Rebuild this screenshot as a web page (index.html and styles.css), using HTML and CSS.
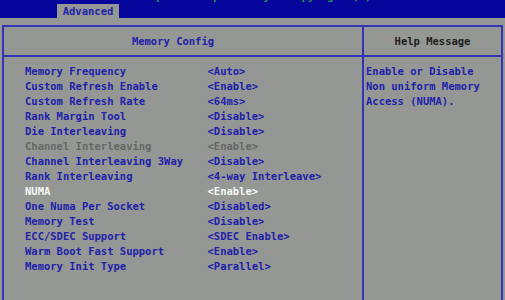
FILE: index.html
```html
<!DOCTYPE html>
<html>
<head>
<meta charset="utf-8">
<link rel="stylesheet" href="styles.css">
</head>
<body>
<div class="topbar">
  <div class="title">Aptio Setup Utility - Copyright (C)</div>
  <div class="tab">Advanced</div>
</div>
<div class="frame">
  <div class="main">
    <div class="head">Memory Config</div>
    <div class="rows">
      <div class="row"><span class="lbl">Memory Frequency</span><span class="val">&lt;Auto&gt;</span></div>
      <div class="row"><span class="lbl">Custom Refresh Enable</span><span class="val">&lt;Enable&gt;</span></div>
      <div class="row"><span class="lbl">Custom Refresh Rate</span><span class="val">&lt;64ms&gt;</span></div>
      <div class="row"><span class="lbl">Rank Margin Tool</span><span class="val">&lt;Disable&gt;</span></div>
      <div class="row"><span class="lbl">Die Interleaving</span><span class="val">&lt;Disable&gt;</span></div>
      <div class="row dim"><span class="lbl">Channel Interleaving</span><span class="val">&lt;Enable&gt;</span></div>
      <div class="row"><span class="lbl">Channel Interleaving 3Way</span><span class="val">&lt;Disable&gt;</span></div>
      <div class="row"><span class="lbl">Rank Interleaving</span><span class="val">&lt;4-way Interleave&gt;</span></div>
      <div class="row sel"><span class="lbl">NUMA</span><span class="val">&lt;Enable&gt;</span></div>
      <div class="row"><span class="lbl">One Numa Per Socket</span><span class="val">&lt;Disabled&gt;</span></div>
      <div class="row"><span class="lbl">Memory Test</span><span class="val">&lt;Disable&gt;</span></div>
      <div class="row"><span class="lbl">ECC/SDEC Support</span><span class="val">&lt;SDEC Enable&gt;</span></div>
      <div class="row"><span class="lbl">Warm Boot Fast Support</span><span class="val">&lt;Enable&gt;</span></div>
      <div class="row"><span class="lbl">Memory Init Type</span><span class="val">&lt;Parallel&gt;</span></div>
    </div>
  </div>
  <div class="side">
    <div class="head help">Help Message</div>
    <div class="helptext">
      <div class="hl">Enable or Disable</div>
      <div class="hl">Non uniform Memory</div>
      <div class="hl">Access (NUMA).</div>
    </div>
  </div>
</div>
</body>
</html>
```

FILE: styles.css
```css
html, body {
  margin: 0;
  padding: 0;
  background: #959795;
  height: 100%;
  overflow: hidden;
}
body {
  font-family: "DejaVu Sans Mono", "Liberation Mono", monospace;
  font-size: 10.5px;
  font-weight: bold;
  color: #2222aa;
}
.topbar {
  position: relative;
  height: 18px;
  background: #06069c;
  overflow: hidden;
}
.title {
  position: absolute;
  left: 150px;
  top: -10px;
  color: #20a040;
  line-height: 12px;
  white-space: pre;
}
.tab {
  position: absolute;
  left: 57px;
  top: 4px;
  width: 62px;
  height: 14px;
  background: #959795;
  line-height: 15px;
  text-align: center;
  color: #2222aa;
}
.frame {
  margin: 7px 0 0 2px;
  width: 497px;
  height: 273px;
  border: 2px solid #3434b4;
  border-bottom: 0;
  display: flex;
}
.main {
  width: 358px;
  border-right: 2px solid #3434b4;
}
.side {
  flex: 1;
}
.head {
  height: 28px;
  line-height: 29px;
  border-bottom: 2px solid #3434b4;
  text-align: center;
}
.main .head {
  padding-right: 20px;
}
.help {
  color: #1e1e1e;
}
.rows {
  padding: 7px 0 0 21px;
}
.row {
  display: flex;
  line-height: 15px;
  height: 15px;
  white-space: pre;
}
.lbl {
  width: 182.5px;
}
.dim {
  color: #666866;
}
.sel {
  color: #f6f6f6;
}
.helptext {
  padding: 7px 0 0 2px;
}
.hl {
  line-height: 15px;
  height: 15px;
  white-space: pre;
}
```
